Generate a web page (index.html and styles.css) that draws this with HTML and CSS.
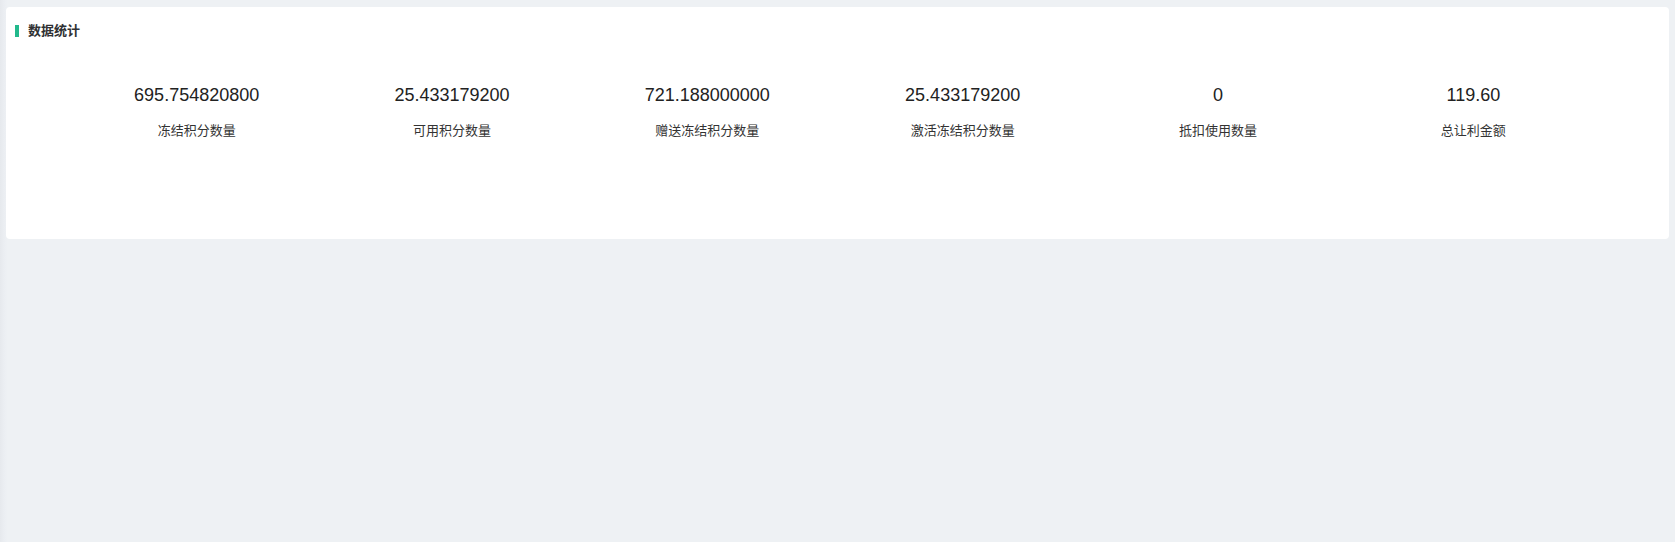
FILE: index.html
```html
<!DOCTYPE html>
<html>
<head>
  <meta charset="utf-8">
  <title>数据统计</title>
  <link rel="stylesheet" href="styles.css">
</head>
<body>
  <div class="main">
    <div class="card">
      <div class="card-title"><span class="mark"></span>数据统计</div>

      <div class="stats">
        <div class="stat">
          <div class="num">695.754820800</div>
          <div class="label">冻结积分数量</div>
        </div>
        <div class="stat">
          <div class="num">25.433179200</div>
          <div class="label">可用积分数量</div>
        </div>
        <div class="stat">
          <div class="num">721.188000000</div>
          <div class="label">赠送冻结积分数量</div>
        </div>
        <div class="stat">
          <div class="num">25.433179200</div>
          <div class="label">激活冻结积分数量</div>
        </div>
        <div class="stat">
          <div class="num">0</div>
          <div class="label">抵扣使用数量</div>
        </div>
        <div class="stat">
          <div class="num">119.60</div>
          <div class="label">总让利金额</div>
        </div>
      </div>
    </div>
  </div>
</body>
</html>
```

FILE: styles.css
```css
html, body {
  height: 100%;
}

body {
  margin: 0;
  padding: 0;
  background: linear-gradient(to right, #e6e9ed 0, #eceff3 5px, #eef1f4 8px);
  color: #303133;
  font-family: "Liberation Sans", "Noto Sans CJK SC", sans-serif;
}

.main {
  padding: 7px 6px;
}

.card {
  background: #fff;
  border-radius: 4px;
  padding: 15px 9px 99px;
}

.card-title {
  display: flex;
  align-items: center;
  font-size: 13px;
  line-height: 18px;
  font-weight: bold;
  color: #303133;
}

.mark {
  width: 4px;
  height: 12px;
  background: #22b98c;
  margin-right: 9px;
}

.stats {
  display: grid;
  grid-template-columns: repeat(6, 1fr);
  margin: 43px 59px 0 54px;
}

.stat {
  text-align: center;
}

.num {
  font-size: 18px;
  line-height: 24px;
  color: #222;
}

.label {
  margin-top: 15px;
  font-size: 13px;
  line-height: 18px;
  color: #333;
}
```
